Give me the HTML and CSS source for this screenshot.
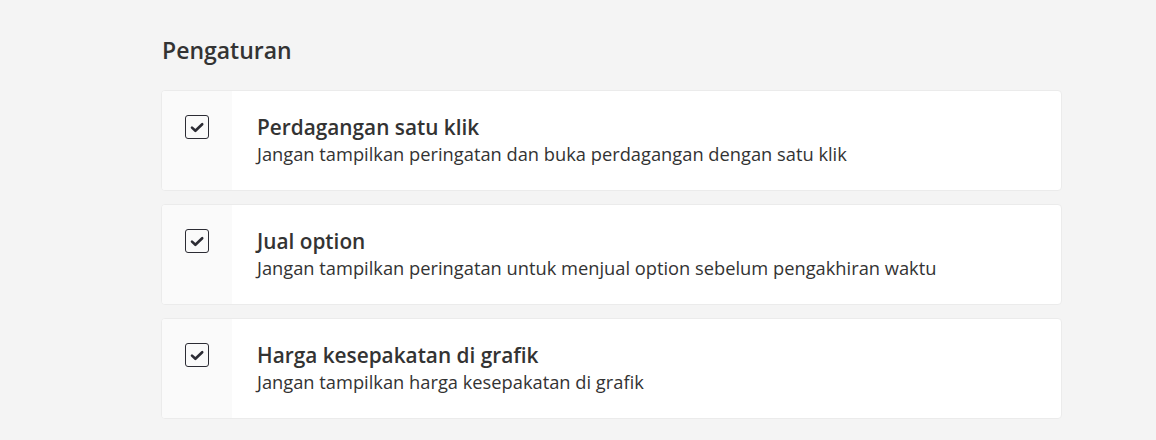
FILE: index.html
```html
<!DOCTYPE html>
<html lang="id">
<head>
<meta charset="utf-8">
<title>Pengaturan</title>
<link rel="stylesheet" href="styles.css">
</head>
<body>
<main class="page">
  <h1 class="heading">Pengaturan</h1>
  <ul class="list">
    <li class="card">
      <div class="check-col">
        <span class="checkbox"><svg viewBox="0 0 22 22"><path d="M6 11.6l3.4 3.2L16.2 8.2" fill="none" stroke="#2c2c34" stroke-width="2.6" stroke-linecap="round" stroke-linejoin="round"/></svg></span>
      </div>
      <div class="text-col">
        <div class="title">Perdagangan satu klik</div>
        <div class="desc">Jangan tampilkan peringatan dan buka perdagangan dengan satu klik</div>
      </div>
    </li>
    <li class="card">
      <div class="check-col">
        <span class="checkbox"><svg viewBox="0 0 22 22"><path d="M6 11.6l3.4 3.2L16.2 8.2" fill="none" stroke="#2c2c34" stroke-width="2.6" stroke-linecap="round" stroke-linejoin="round"/></svg></span>
      </div>
      <div class="text-col">
        <div class="title">Jual option</div>
        <div class="desc">Jangan tampilkan peringatan untuk menjual option sebelum pengakhiran waktu</div>
      </div>
    </li>
    <li class="card">
      <div class="check-col">
        <span class="checkbox"><svg viewBox="0 0 22 22"><path d="M6 11.6l3.4 3.2L16.2 8.2" fill="none" stroke="#2c2c34" stroke-width="2.6" stroke-linecap="round" stroke-linejoin="round"/></svg></span>
      </div>
      <div class="text-col">
        <div class="title">Harga kesepakatan di grafik</div>
        <div class="desc">Jangan tampilkan harga kesepakatan di grafik</div>
      </div>
    </li>
  </ul>
</main>
</body>
</html>
```
FILE: styles.css
```css
html, body {
  margin: 0;
  padding: 0;
  background: #f4f4f4;
}
body {
  font-family: "Open Sans", "Noto Sans", sans-serif;
  color: #333333;
}
.page {
  width: 901px;
  margin-left: 161px;
  padding-top: 34px;
}
.heading {
  margin: 0 0 24px 1px;
  font-size: 23px;
  line-height: 32px;
  font-weight: 600;
  color: #333333;
}
.list {
  list-style: none;
  margin: 0;
  padding: 0;
  display: flex;
  flex-direction: column;
  gap: 13px;
}
.card {
  display: flex;
  background: #ffffff;
  border: 1px solid #ebebeb;
  border-radius: 4px;
  overflow: hidden;
}
.check-col {
  width: 70px;
  flex: none;
  background: #fafafa;
  display: flex;
  justify-content: center;
  align-items: flex-start;
  padding-top: 24px;
}
.checkbox {
  width: 22px;
  height: 22px;
  border: 1px solid #2c2c34;
  border-radius: 3px;
  display: flex;
  align-items: center;
  justify-content: center;
}
.checkbox svg {
  width: 22px;
  height: 22px;
  display: block;
}
.text-col {
  padding: 22px 24px 23px 25px;
}
.title {
  font-size: 20.8px;
  line-height: 28px;
  font-weight: 600;
  color: #333333;
}
.desc {
  font-size: 18.3px;
  line-height: 26px;
  color: #333333;
}
```
